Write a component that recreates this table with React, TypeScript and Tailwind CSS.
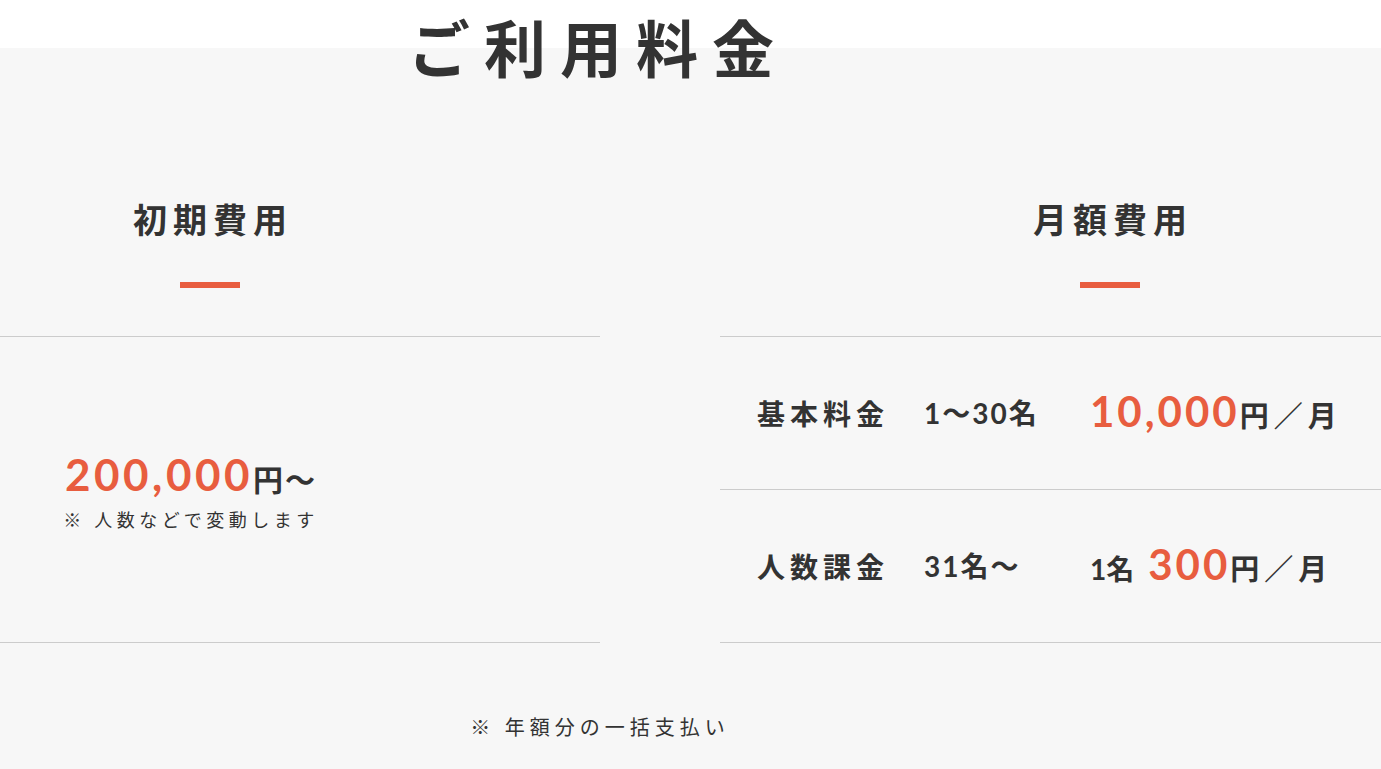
import React from 'react';

const jp = "font-['Noto_Sans_CJK_JP',sans-serif]";
const num = "font-['Lato','Noto_Sans_CJK_JP',sans-serif]";

export default function App() {
  const rows = [
    { label: "基本料金", range: "1〜30名", prefix: "", price: "10,000" },
    { label: "人数課金", range: "31名〜", prefix: "1名", price: "300" },
  ];

  return (
    <div className={`min-h-screen w-[1381px] overflow-hidden bg-[#f7f7f7] text-[#333] ${jp}`}>
      <div className="h-12 bg-white" />

      <section className="w-[1200px]">
        {/* Title straddles the white/grey edge */}
        <h2 className="-mt-[33px] pr-[4px] text-center text-[62px] leading-none font-bold tracking-[14px]">
          ご利用料金
        </h2>

        <div className="mt-[125px] -ml-[180px] flex gap-[120px]">
          {/* Initial cost */}
          <div className="w-[780px] shrink-0">
            <div className="flex flex-col items-center">
              <h3 className="text-[34px] leading-none font-bold tracking-[6px] pl-[6px]">初期費用</h3>
              <div className="mt-[46px] h-[6px] w-[60px] bg-[#e85d3f]" />
            </div>
            <div className="mt-[48px] flex h-[307px] flex-col items-center justify-center border-y border-[#cccccc] pr-[38px]">
              <p className="flex items-baseline leading-none">
                <span className={`${num} text-[44px] font-bold tracking-[3.5px] text-[#e85d3f]`}>200,000</span>
                <span className="text-[30px] font-bold tracking-[2px]">円〜</span>
              </p>
              <p className="mt-[14px] text-[18px] leading-none tracking-[4.5px]">※ 人数などで変動します</p>
            </div>
          </div>

          {/* Monthly cost */}
          <div className="w-[780px] shrink-0">
            <div className="flex flex-col items-center">
              <h3 className="text-[34px] leading-none font-bold tracking-[6px] pl-[6px]">月額費用</h3>
              <div className="mt-[46px] h-[6px] w-[60px] bg-[#e85d3f]" />
            </div>
            <div className="mt-[48px] border-b border-[#cccccc]">
              {rows.map((r) => (
                <div key={r.label} className="flex h-[153px] items-center border-t border-[#cccccc] pl-[37px]">
                  <span className="w-[167px] text-[28px] font-bold tracking-[5px]">{r.label}</span>
                  <span className={`${num} w-[166px] text-[28px] font-bold tracking-[2px]`}>{r.range}</span>
                  <span className="-mt-[4px] flex items-baseline">
                    {r.prefix && <span className={`${num} mr-[14px] text-[28px] font-bold`}>{r.prefix}</span>}
                    <span className={`${num} text-[42px] font-bold tracking-[3px] text-[#e85d3f]`}>{r.price}</span>
                    <span className="text-[29px] font-bold tracking-[5px]">円／月</span>
                  </span>
                </div>
              ))}
            </div>
          </div>
        </div>

        <p className="mt-[69px] text-center text-[20px] leading-[30px] tracking-[5px]">※ 年額分の一括支払い</p>
      </section>
    </div>
  );
}
